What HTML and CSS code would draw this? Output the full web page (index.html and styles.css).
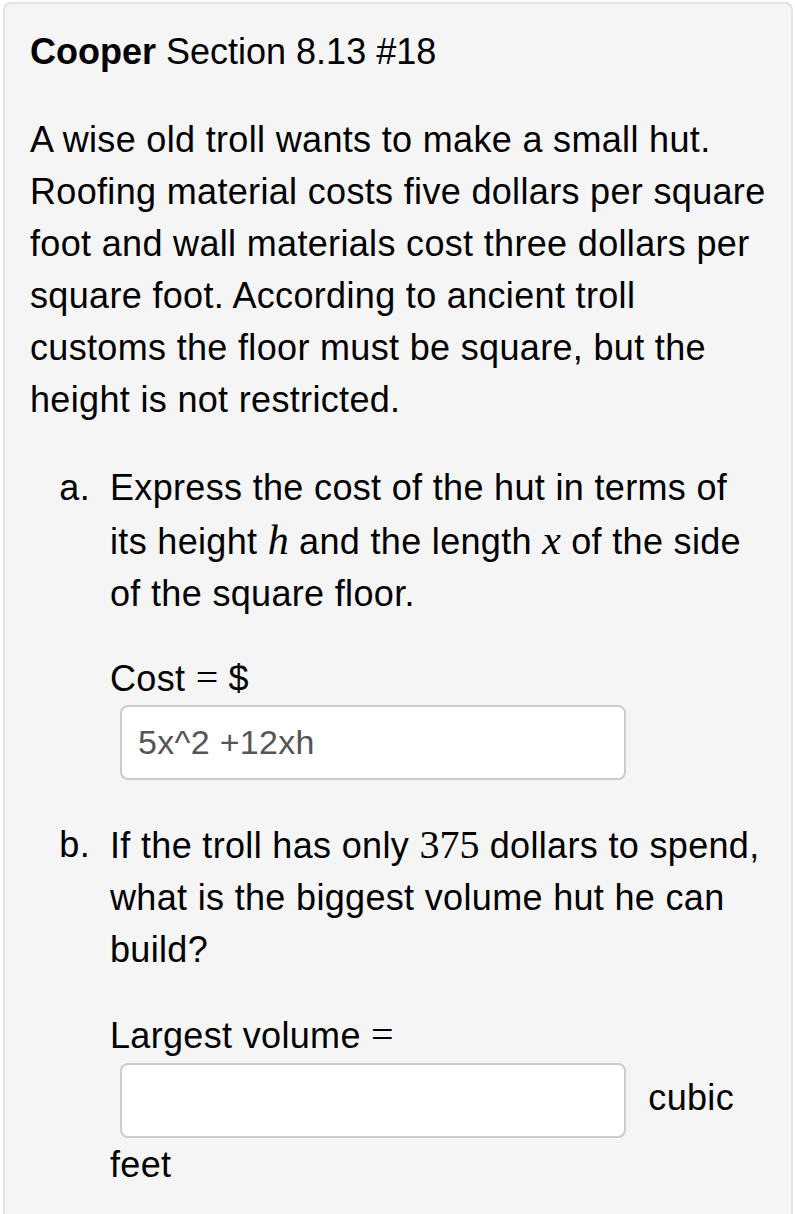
FILE: index.html
```html
<!DOCTYPE html>
<html>
<head>
<meta charset="utf-8">
<link rel="stylesheet" href="styles.css">
</head>
<body>
<div class="card">
  <h1 class="title"><b>Cooper</b> Section 8.13 #18</h1>
  <p class="intro">A wise old troll wants to make a small hut. Roofing material costs five dollars per square foot and wall materials cost three dollars per square foot. According to ancient troll customs the floor must be square, but the height is not restricted.</p>
  <div class="part">
    <div class="label">a.</div>
    <div class="body">
      <p class="q">Express the cost of the hut in terms of its height <span class="mi">h</span> and the length <span class="mi">x</span> of the side of the square floor.</p>
      <p class="answer">Cost <span class="mo">=</span> $ <input class="field" type="text" value="5x^2 +12xh"></p>
    </div>
  </div>
  <div class="part">
    <div class="label">b.</div>
    <div class="body">
      <p class="q">If the troll has only <span class="mn">375</span> dollars to spend, what is the biggest volume hut he can build?</p>
      <p class="answer answer-b">Largest volume <span class="mo">=</span> <input class="field" type="text" value=""> cubic feet</p>
    </div>
  </div>
</div>
</body>
</html>
```
FILE: styles.css
```css
html, body {
  margin: 0;
  padding: 0;
  background: #ffffff;
}
body {
  padding: 2px 2px 0 3px;
  font-family: "Liberation Sans", Arial, Helvetica, sans-serif;
  font-size: 36px;
  line-height: 52px;
  letter-spacing: 0.33px;
  color: #000;
}
.card {
  background: #f5f5f5;
  border: 2px solid #e3e3e3;
  border-bottom: none;
  border-radius: 8px 8px 0 0;
  padding: 0 25px 20px 25px;
  min-height: 1240px;
  box-sizing: border-box;
}
.title {
  margin: 0;
  padding-top: 22px;
  font-size: 36px;
  font-weight: normal;
  line-height: 52px;
  letter-spacing: 0;
}
.title b {
  font-weight: bold;
}
.intro {
  margin: 36px 0 36px 0;
}
.part {
  display: flex;
  gap: 20px;
  margin-bottom: 39px;
}
.label {
  width: 60px;
  flex: none;
  text-align: right;
}
.body {
  flex: 1;
}
.q {
  margin: 0 0 32px 0;
}
.answer {
  margin: 0;
}
.answer-b {
  line-height: 54px;
}
.mi {
  font-family: "Liberation Serif", "DejaVu Serif", serif;
  font-style: italic;
  font-size: 42px;
  letter-spacing: 0;
}
.mn {
  font-family: "Liberation Serif", "DejaVu Serif", serif;
  font-size: 40px;
  letter-spacing: 0;
}
.mo {
  font-family: "Liberation Serif", "DejaVu Serif", serif;
  font-size: 40px;
  letter-spacing: 0;
}
.field {
  box-sizing: border-box;
  width: 506px;
  height: 75px;
  margin: 0 12px 0 10px;
  padding: 0 16px;
  border: 2px solid #cccccc;
  border-radius: 8px;
  background: #fff;
  font-family: "Liberation Sans", Arial, Helvetica, sans-serif;
  font-size: 34px;
  letter-spacing: 0.3px;
  color: #555;
  vertical-align: middle;
}
```
